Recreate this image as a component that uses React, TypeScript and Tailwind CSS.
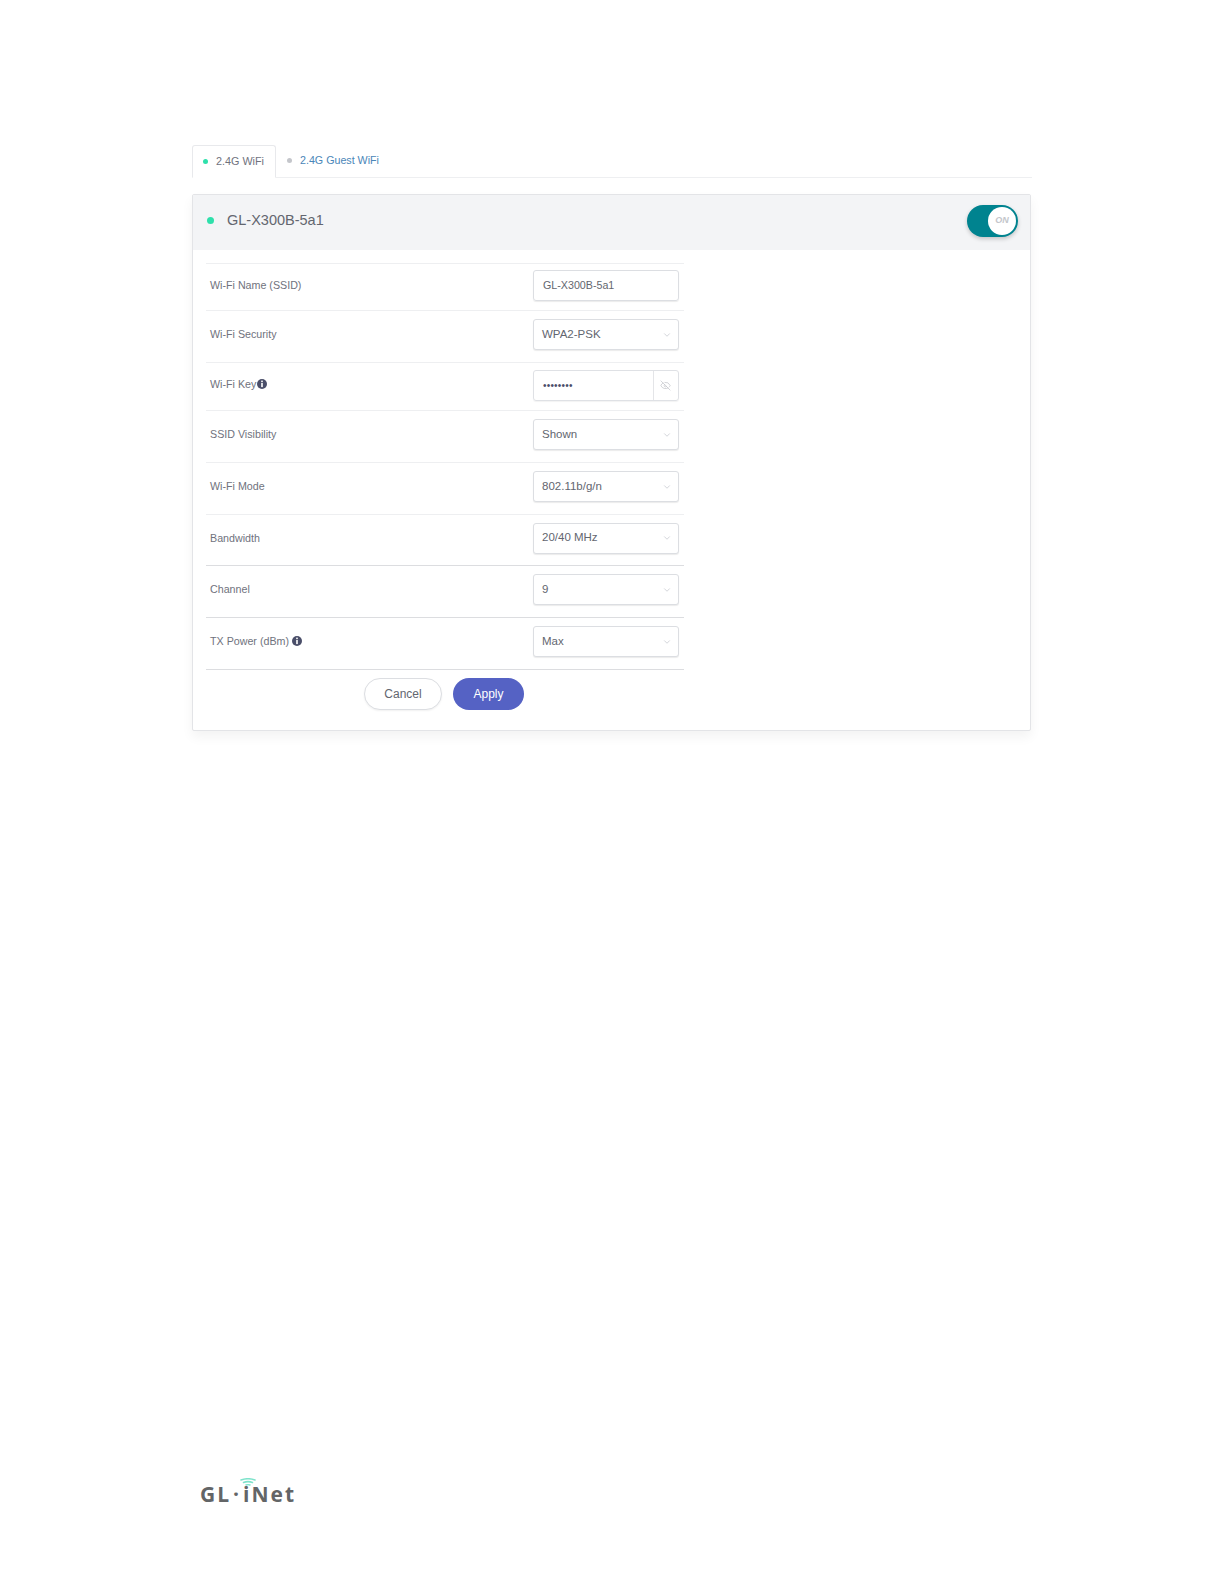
import { ChevronDown, EyeOff } from 'lucide-react'

const FONT = "font-['Liberation_Sans',Arial,sans-serif]"

function InfoDot() {
  return (
    <svg viewBox="0 0 10 10" className="h-[10px] w-[10px] shrink-0">
      <circle cx="5" cy="5" r="5" fill="#4a4e69" />
      <rect x="4.2" y="1.6" width="1.6" height="1.5" fill="#fff" />
      <rect x="4.2" y="3.9" width="1.6" height="4.2" fill="#fff" />
    </svg>
  )
}

function SelectBox({ value }: { value: string }) {
  return (
    <div className="-mt-1 flex h-[31px] w-[146px] items-center justify-between rounded-[3px] border border-[#dcdee2] bg-white pl-2 pr-[6px] shadow-[0_1px_1px_rgba(0,0,0,0.08)]">
      <span className="text-[11.5px] text-[#63666f]">{value}</span>
      <ChevronDown className="h-[10px] w-[10px] text-[#b9bcc4]" strokeWidth={1.5} />
    </div>
  )
}

function Row({ label, info, height, line = 'border-[#eeeff1]', children }: {
  label: string
  info?: 'tight' | 'wide'
  height: string
  line?: string
  children: React.ReactNode
}) {
  return (
    <div className={`flex items-center justify-between border-t pl-1 pr-[5px] ${height} ${line}`}>
      <div className={`-mt-1 flex items-center text-[10.7px] text-[#6f727d] ${info === 'wide' ? 'gap-[3px]' : 'gap-px'}`}>
        <span>{label}</span>
        {info && <InfoDot />}
      </div>
      {children}
    </div>
  )
}

export default function App() {
  return (
    <div className={`${FONT} flex min-h-[1584px] flex-col bg-white pl-[192px] pt-[145px]`}>
      {/* Tabs */}
      <div className="flex h-[33px] w-[840px] border-b border-[#eeeff1]">
        <div className="-mb-px flex h-[33px] w-[84px] items-center gap-[8px] rounded-t-[3px] border border-b-white border-[#e8e9ec] bg-white pb-px pl-[10px] text-[10.8px] text-[#6f727d]">
          <span className="h-[5px] w-[5px] rounded-full bg-[#2ee0ab]" />
          2.4G WiFi
        </div>
        <div className="flex items-center gap-[8px] pb-px pl-[11px] text-[10.7px] text-[#4a86b8]">
          <span className="h-[5px] w-[5px] rounded-full bg-[#c4c6cb]" />
          2.4G Guest WiFi
        </div>
      </div>

      {/* Card */}
      <div className="mt-4 h-[537px] w-[839px] rounded-[2px] border border-[#e3e4e7] bg-white shadow-[0_6px_12px_rgba(0,0,0,0.05)]">
        <div className="flex h-[55px] items-center justify-between bg-[#f3f4f6] pb-1 pl-[14px] pr-[12px]">
          <div className="flex items-center gap-[13px] text-[14.5px] text-[#63666f]">
            <span className="h-[7px] w-[7px] rounded-full bg-[#2ee0ab]" />
            GL-X300B-5a1
          </div>
          <div className="flex h-8 w-[51px] items-center justify-end rounded-full bg-[#00838f] pr-[2px] shadow-[0_2px_4px_rgba(0,0,0,0.2)]">
            <div className="flex h-[28px] w-[28px] items-center justify-center rounded-full bg-white text-[9px] font-bold italic text-[#c4c6cb]">
              ON
            </div>
          </div>
        </div>

        <div className="ml-[13px] mt-[13px] w-[478px]">
          <Row label="Wi-Fi Name (SSID)" height="h-[47px]">
            <div className="-mt-1 flex h-[31px] w-[146px] items-center rounded-[3px] border border-[#dcdee2] pl-[9px] text-[10.7px] text-[#63666f] shadow-[0_1px_1px_rgba(0,0,0,0.08)]">
              GL-X300B-5a1
            </div>
          </Row>
          <Row label="Wi-Fi Security" height="h-[52px]">
            <SelectBox value="WPA2-PSK" />
          </Row>
          <Row label="Wi-Fi Key" info="tight" height="h-[48px]">
            <div className="-mt-0.5 flex h-[31px] w-[146px] items-center rounded-[3px] border border-[#dfe1e5] shadow-[0_1px_1px_rgba(0,0,0,0.05)]">
              <span className="flex h-full flex-1 items-center pl-[9px] text-[10px] tracking-[0.2px] text-[#4a4e69]">••••••••</span>
              <span className="flex h-full w-[25px] items-center justify-center border-l border-[#e4e5e8] pr-px">
                <EyeOff className="h-[11px] w-[11px] text-[#c0c2c8]" strokeWidth={1.5} />
              </span>
            </div>
          </Row>
          <Row label="SSID Visibility" height="h-[52px]">
            <SelectBox value="Shown" />
          </Row>
          <Row label="Wi-Fi Mode" height="h-[52px]">
            <SelectBox value="802.11b/g/n" />
          </Row>
          <Row label="Bandwidth" height="h-[51px]">
            <SelectBox value="20/40 MHz" />
          </Row>
          <Row label="Channel" height="h-[52px]" line="border-[#dcdde0]">
            <SelectBox value="9" />
          </Row>
          <Row label="TX Power (dBm)" info="wide" height="h-[52px]" line="border-[#dcdde0]">
            <SelectBox value="Max" />
          </Row>
          <div className="border-t border-[#dcdde0] pt-2">
            <div className="ml-[158px] flex gap-[11px]">
              <div className="flex h-8 w-[78px] items-center justify-center rounded-full border border-[#dcdee2] bg-white text-[12px] text-[#63666f] shadow-[0_1px_2px_rgba(0,0,0,0.06)]">
                Cancel
              </div>
              <div className="flex h-8 w-[71px] items-center justify-center rounded-full bg-[#5562c4] text-[12px] text-white">
                Apply
              </div>
            </div>
          </div>
        </div>
      </div>

      {/* Footer logo */}
      <div className="relative ml-[8px] mt-[749px] w-fit font-['Open_Sans',sans-serif] text-[21px] font-bold leading-[28px] tracking-[2px] text-[#636567]">
        <svg viewBox="0 0 16 9" className="absolute left-[40px] top-[-2px] h-[9px] w-[16px]" fill="none" stroke="#7fe3cb" strokeLinecap="round">
          <path d="M1 2 Q8 -0.5 15 2" strokeWidth="1.6" />
          <path d="M3.5 4.5 Q8 2.8 12.5 4.5" strokeWidth="1.6" />
          <path d="M6 7 Q8 6.2 10 7" strokeWidth="1.4" />
        </svg>
        GL<span className="mx-[2px]">·</span>iNet
      </div>
    </div>
  )
}
